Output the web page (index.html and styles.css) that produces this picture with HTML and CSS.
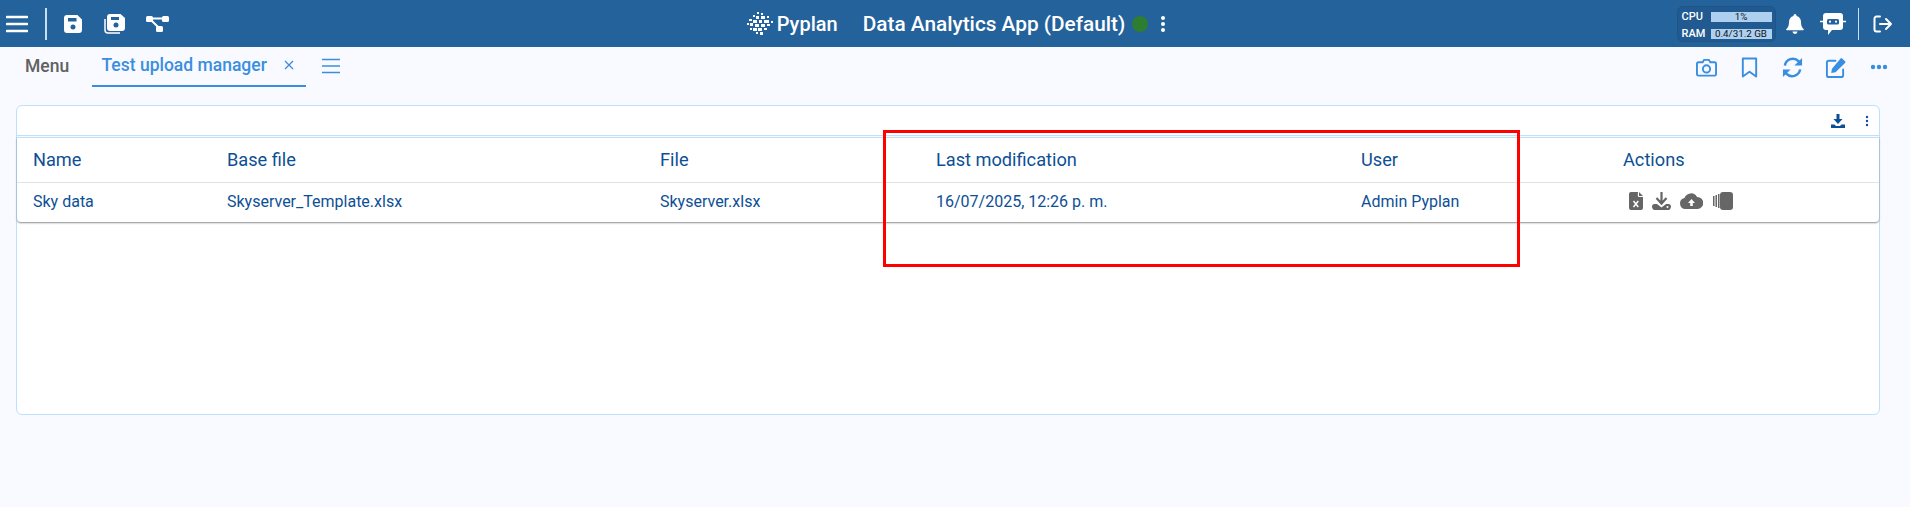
FILE: index.html
```html
<!DOCTYPE html>
<html lang="en">
<head>
<meta charset="utf-8">
<title>Pyplan</title>
<link rel="stylesheet" href="styles.css">
</head>
<body>
<header class="topbar">
  <div class="top-left">
    <svg class="ic-menu" viewBox="0 0 22 18"><path d="M1 2h20M1 9h20M1 16h20" stroke="#fff" stroke-width="2.6" stroke-linecap="round" fill="none"/></svg>
    <span class="vsep"></span>
    <svg class="ic-save" viewBox="0 0 18 18"><path fill="#fff" fill-rule="evenodd" d="M3 0h10.5L18 4.5V15a3 3 0 0 1-3 3H3a3 3 0 0 1-3-3V3a3 3 0 0 1 3-3zM4 3v3.5h8.5V3zM9 9.500a2.500 2.500 0 1 0 0 5 2.500 2.500 0 0 0 0-5z"/></svg>
    <svg class="ic-saveall" viewBox="0 0 21 20"><path fill="#fff" fill-rule="evenodd" d="M6 0h10.5L21 4v10a3 3 0 0 1-3 3H6a3 3 0 0 1-3-3V3a3 3 0 0 1 3-3zM7 3v3h8V3zM12 8.500a2.500 2.500 0 1 0 0 5 2.500 2.500 0 0 0 0-5z"/><path d="M1 5v11a3 3 0 0 0 3 3h12" stroke="#fff" stroke-width="1.500" fill="none"/></svg>
    <svg class="ic-flow" viewBox="0 0 23 18"><g fill="#fff"><rect x="0" y="1" width="7" height="6" rx="1.500"/><rect x="16" y="1" width="7" height="6" rx="1.500"/><rect x="10" y="11" width="7" height="6" rx="1.500"/></g><path d="M6 3.500h11M5 5l8 8" stroke="#fff" stroke-width="2" fill="none"/></svg>
  </div>
  <div class="top-center">
    <svg class="ic-logo" viewBox="0 0 26 23"><g fill="#fff"><rect x="10" y="0" width="2" height="2"/><rect x="14" y="1" width="2" height="2"/><rect x="6" y="3" width="2" height="2"/><rect x="9" y="4" width="3" height="3"/><rect x="14" y="4" width="4" height="3"/><rect x="20" y="4" width="2" height="2"/><rect x="2" y="7" width="3" height="2"/><rect x="6" y="8" width="4" height="3"/><rect x="12" y="8" width="3" height="3"/><rect x="17" y="8" width="5" height="3"/><rect x="24" y="9" width="2" height="2"/><rect x="0" y="11" width="2" height="2"/><rect x="3" y="11" width="3" height="3"/><rect x="8" y="12" width="4" height="3"/><rect x="14" y="12" width="4" height="3"/><rect x="20" y="12" width="3" height="2"/><rect x="3" y="16" width="2" height="2"/><rect x="6" y="16" width="4" height="3"/><rect x="11" y="16" width="4" height="3"/><rect x="17" y="16" width="3" height="2"/><rect x="9" y="20" width="2" height="2"/><rect x="13" y="20" width="3" height="3"/></g></svg>
    <span class="brand">Pyplan</span>
    <span class="app-title">Data Analytics App (Default)</span>
    <span class="status-dot"></span>
    <svg class="ic-dots-v" viewBox="0 0 6 18"><g fill="#fff"><circle cx="3" cy="3" r="2"/><circle cx="3" cy="9" r="2"/><circle cx="3" cy="15" r="2"/></g></svg>
  </div>
  <div class="top-right">
    <div class="meter">
      <div class="meter-row"><span class="meter-label">CPU</span><span class="meter-bar">1%</span></div>
      <div class="meter-row"><span class="meter-label">RAM</span><span class="meter-bar">0.4/31.2 GB</span></div>
    </div>
    <svg class="ic-bell" viewBox="0 0 18 20"><path fill="#fff" d="M9 0a1.500 1.500 0 0 1 1.500 1.500v.6C13.500 2.800 15 5.300 15 8c0 3.500.8 5.200 2.600 7 .5.500.2 1.300-.6 1.300H1c-.8 0-1.100-.8-.6-1.300C2.200 13.200 3 11.500 3 8c0-2.700 1.500-5.200 4.500-5.900v-.6A1.500 1.500 0 0 1 9 0zM6.500 17.500h5a2.500 2.500 0 0 1-5 0z"/></svg>
    <svg class="ic-bot" viewBox="0 0 26 22"><path fill="#fff" d="M6 0h14a3 3 0 0 1 3 3v11a3 3 0 0 1-3 3h-8l-4 5v-5H6a3 3 0 0 1-3-3V3a3 3 0 0 1 3-3z"/><rect x="7" y="6" width="12" height="5.500" rx="1.500" fill="#24629c"/><circle cx="10" cy="8.700" r="1.100" fill="#fff"/><circle cx="16" cy="8.700" r="1.100" fill="#fff"/><path d="M0 8.500h3M23 8.500h3" stroke="#fff" stroke-width="1.500"/></svg>
    <span class="vsep"></span>
    <svg class="ic-exit" viewBox="0 0 20 18"><path d="M7 1.500H3.500a2 2 0 0 0-2 2v11a2 2 0 0 0 2 2H7M7 9h11M13 4l5 5-5 5" stroke="#fff" stroke-width="2" stroke-linecap="round" stroke-linejoin="round" fill="none"/></svg>
  </div>
</header>

<nav class="tabbar">
  <div class="tabs">
    <span class="tab-menu">Menu</span>
    <div class="tab-active">
      <span>Test upload manager</span>
      <svg class="ic-close" viewBox="0 0 10 10"><path d="M1 1l8 8M9 1l-8 8" stroke="#3a8ee0" stroke-width="1.300" fill="none"/></svg>
    </div>
    <svg class="ic-list" viewBox="0 0 18 16"><path d="M0 1.500h18M0 8h18M0 14.500h18" stroke="#3a8ee0" stroke-width="1.400" fill="none"/></svg>
  </div>
  <div class="tab-tools">
    <svg class="tool" viewBox="0 0 22 20"><path d="M2.500 4.500H7L8.500 2h5L15 4.500h4.500A1.500 1.500 0 0 1 21 6v11a1.500 1.500 0 0 1-1.500 1.500h-17A1.500 1.500 0 0 1 1 17V6a1.500 1.500 0 0 1 1.500-1.500z" stroke="#3a8ee0" stroke-width="2" fill="none"/><circle cx="11" cy="11.500" r="3.800" stroke="#3a8ee0" stroke-width="2" fill="none"/></svg>
    <svg class="tool" viewBox="0 0 22 22"><path d="M4 1.500h14v19l-7-5-7 5z" stroke="#3a8ee0" stroke-width="2" stroke-linejoin="round" fill="none"/></svg>
    <svg class="tool" viewBox="0 0 22 22"><path d="M3 9a8.500 8.500 0 0 1 14.500-4.500L20 7M19 13a8.500 8.500 0 0 1-14.500 4.500L2 15" stroke="#3a8ee0" stroke-width="2.600" fill="none"/><path fill="#3a8ee0" d="M21 1v8h-8zM1 21v-8h8z"/></svg>
    <svg class="tool" viewBox="0 0 22 22"><path d="M11 4H4a2 2 0 0 0-2 2v13a2 2 0 0 0 2 2h13a2 2 0 0 0 2-2v-6" stroke="#3a8ee0" stroke-width="2" fill="none" stroke-linecap="round"/><path fill="#3a8ee0" d="M18 1.500l3 3a1.200 1.200 0 0 1 0 1.700L11 16l-4.500.8.800-4.500 9-10.800a1.200 1.200 0 0 1 1.700 0z"/></svg>
    <svg class="tool-more" viewBox="0 0 18 6"><g fill="#3a8ee0"><circle cx="3" cy="3" r="2.200"/><circle cx="9" cy="3" r="2.200"/><circle cx="15" cy="3" r="2.200"/></g></svg>
  </div>
</nav>

<main class="card">
  <div class="card-tools">
    <svg class="ic-dl" viewBox="0 0 14 14"><path fill="#0d4f96" d="M5.500 0h3v5h3L7 10 2.500 5h3zM0 10.500h3.500L5 12h4l1.500-1.500H14V14H0z"/></svg>
    <svg class="ic-dots-small" viewBox="0 0 4 12"><g fill="#0d4f96"><circle cx="2" cy="2" r="1.200"/><circle cx="2" cy="6" r="1.200"/><circle cx="2" cy="10" r="1.200"/></g></svg>
  </div>
  <div class="table">
    <div class="row head">
      <span>Name</span><span>Base file</span><span>File</span><span>Last modification</span><span>User</span><span>Actions</span>
    </div>
    <div class="row body-row">
      <span>Sky data</span><span>Skyserver_Template.xlsx</span><span>Skyserver.xlsx</span><span>16/07/2025, 12:26 p. m.</span><span>Admin Pyplan</span>
      <span class="actions">
        <svg class="act-file" viewBox="0 0 14 18"><path fill="#666" d="M2 0h7l-.2 3.500a1.500 1.500 0 0 0 1.500 1.500H14v11a2 2 0 0 1-2 2H2a2 2 0 0 1-2-2V2a2 2 0 0 1 2-2zM10 0l4 4h-4z"/><path d="M4.500 9l4.800 6M9.300 9l-4.800 6" stroke="#fff" stroke-width="1.500"/></svg>
        <svg class="act-dl" viewBox="0 0 19 18"><path d="M9.500 0v10M4.500 6l5 5.500 5-5.500" stroke="#666" stroke-width="2.200" fill="none"/><path fill="#666" fill-rule="evenodd" d="M0 14.500C0 13 1 12 2.500 12H5l4.500 3.500L14 12h2.500C18 12 19 13 19 14.500S18 18 16.500 18h-14C1 18 0 16 0 14.500zM15.500 14a1 1 0 1 0 0 2 1 1 0 0 0 0-2z"/></svg>
        <svg class="act-cloud" viewBox="0 0 23 16"><path fill="#666" fill-rule="evenodd" d="M5.500 16a5.500 5.500 0 0 1-1-10.900A6.800 6.800 0 0 1 17 4a6 6 0 0 1 .5 12zM11.500 6L8 10h2.200v3h2.600v-3H15z"/></svg>
        <svg class="act-book" viewBox="0 0 20 18"><g fill="#666"><rect x="0" y="4" width="1.500" height="10"/><rect x="2.500" y="3" width="1.500" height="12"/><rect x="5" y="2" width="1.500" height="14"/><rect x="7" y="0" width="13" height="18" rx="3"/></g></svg>
      </span>
    </div>
  </div>
</main>

<div class="highlight"></div>
</body>
</html>
```

FILE: styles.css
```css
* { box-sizing: border-box; }
html, body { margin: 0; padding: 0; }
body {
  width: 1910px;
  height: 507px;
  overflow: hidden;
  background: #f8faff;
  font-family: Roboto, "Liberation Sans", sans-serif;
  position: relative;
}
svg { display: block; flex: none; }

.topbar {
  height: 47px;
  background: #24629c;
  color: #fff;
  display: grid;
  grid-template-columns: 1fr auto 1fr;
  align-items: center;
}
.top-left { display: flex; align-items: center; padding-left: 6px; }
.ic-menu { width: 22px; height: 18px; }
.vsep { width: 1.500px; height: 32px; background: #c8def2; display: block; flex: none; }
.top-left .vsep { margin-left: 17px; margin-right: 17.500px; }
.ic-save { width: 18px; height: 18px; }
.ic-saveall { width: 21px; height: 20px; margin-left: 22px; }
.ic-flow { width: 23px; height: 18px; margin-left: 21px; }

.top-center { display: flex; align-items: center; padding-left: 2px; }
.ic-logo { width: 26px; height: 23px; margin-left: 1px; }
.brand { font-size: 20px; font-weight: 500; margin-left: 4px; }
.app-title { font-size: 20.800px; font-weight: 500; margin-left: 25px; }
.status-dot { width: 16px; height: 16px; border-radius: 50%; background: #2e7d32; margin-left: 7px; }
.ic-dots-v { width: 6px; height: 18px; margin-left: 12px; }

.top-right { display: flex; align-items: center; justify-content: flex-end; padding-right: 17px; }
.meter {
  display: flex; flex-direction: column; gap: 7px;
  width: 99px; height: 36px; padding: 5px 3px 0 4px;
  background: #215a90; border: 1px solid #1e5486; border-radius: 6px;
}
.meter-row { display: flex; align-items: center; justify-content: space-between; height: 10px; }
.meter-label { font-size: 11px; line-height: 10px; color: #fff; font-weight: 500; }
.meter-bar {
  width: 61px; height: 10px; background: #aed0f0; color: #111;
  font-size: 9.800px; line-height: 10px; text-align: center;
}
.ic-bell { width: 18px; height: 20px; margin-left: 10px; }
.ic-bot { width: 26px; height: 22px; margin-left: 16px; }
.top-right .vsep { margin-left: 12px; margin-right: 14px; }
.ic-exit { width: 20px; height: 18px; }

.tabbar {
  height: 40px;
  display: flex; align-items: flex-start; justify-content: space-between;
  padding-right: 22px;
}
.tabs { display: flex; align-items: center; height: 40px; }
.tab-menu { font-size: 17.500px; font-weight: 500; color: #616161; margin: -2px 0 0 25px; width: 67px; }
.tab-active {
  display: flex; align-items: center; justify-content: space-between;
  width: 214px; height: 40px;
  padding: 0 12px 2px 9.500px;
  border-bottom: 2px solid #3a8ee0;
  color: #3a8ee0; font-size: 17.500px; font-weight: 500;
}
.ic-close { width: 10px; height: 10px; }
.ic-list { width: 18px; height: 16px; margin-left: 16px; margin-top: -2px; }
.tab-tools { display: flex; align-items: center; height: 40px; gap: 22px; }
.tool { width: 21px; height: 21px; }
.tool-more { width: 18px; height: 6px; margin-left: 2px; }

.card {
  margin: 18px 0 0 16px;
  width: 1864px;
  height: 310px;
  background: #fff;
  border: 1px solid #bde0fb;
  border-radius: 6px;
}
.card-tools {
  height: 30px;
  display: flex; align-items: center; justify-content: flex-end;
  gap: 20px; padding: 0 10px 0 0;
  border-bottom: 1px solid #bde0fb;
}
.ic-dl { width: 14px; height: 14px; }
.ic-dots-small { width: 4px; height: 12px; }
.table {
  margin-top: 1px;
  border-top: 1px solid #bde0fb;
  border-bottom-left-radius: 4px;
  border-bottom-right-radius: 4px;
  box-shadow: 0 1px 2px rgba(0,0,0,.45);
  color: #0d4f96;
}
.row {
  display: grid;
  grid-template-columns: 194px 433px 276px 425px 262px 1fr;
  align-items: center;
  padding-left: 16px;
}
.head { height: 45px; padding-bottom: 2px; font-size: 18.200px; border-bottom: 1px solid #dfe3e8; }
.body-row { height: 39px; padding-bottom: 3px; font-size: 16px; }
.actions { display: flex; align-items: center; gap: 9px; padding-left: 6px; }
.act-file { width: 14px; height: 18px; }
.act-dl { width: 19px; height: 18px; }
.act-cloud { width: 23px; height: 16px; }
.act-book { width: 20px; height: 18px; margin-left: 1px; }

.highlight {
  position: absolute;
  left: 883px; top: 130px;
  width: 637px; height: 137px;
  border: 3px solid #ff0000;
  pointer-events: none;
}
```
